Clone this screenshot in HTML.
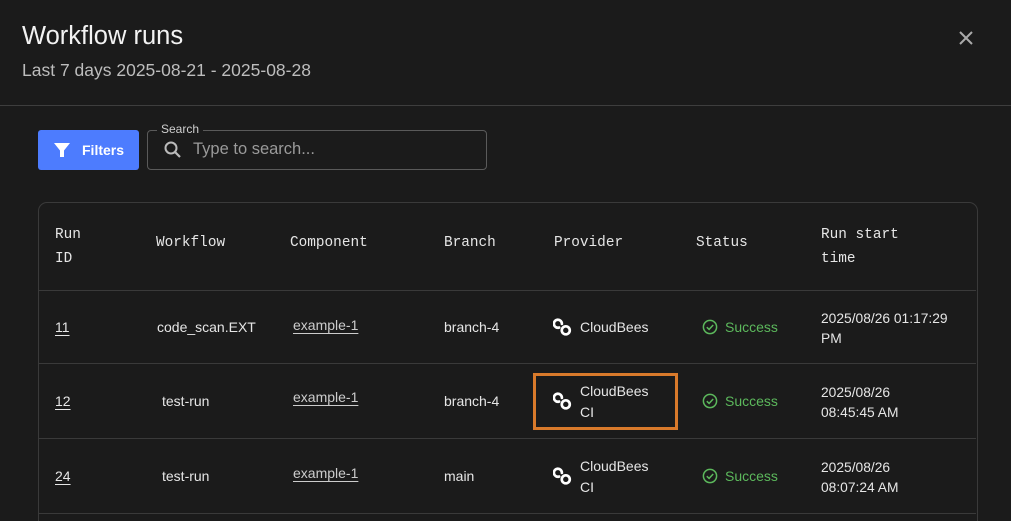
<!DOCTYPE html>
<html><head><meta charset="utf-8"><style>
*{margin:0;padding:0;box-sizing:border-box}
html,body{width:1011px;height:521px;overflow:hidden}
body{background:#1b1b1b;font-family:"Liberation Sans",sans-serif;color:#e8e8e8;position:relative}
.a{position:absolute;white-space:nowrap}
.mono{font-family:"Liberation Mono",monospace;font-size:14.4px;color:#e6e6e6}
.t{font-size:14px;color:#e6e6e6}
.u{text-decoration:underline;text-underline-offset:3px}
.line{position:absolute;left:39px;width:937px;height:1px;background:#3a3a3a}
.ok{color:#5cb85c;font-size:14px}
</style></head><body>
<div class="a" style="left:22px;top:22px;font-size:25.5px;color:#f2f2f2">Workflow runs</div>
<div class="a" style="left:22px;top:60px;font-size:17.5px;color:#bdbdbd">Last 7 days 2025-08-21 - 2025-08-28</div>
<svg class="a" style="left:958px;top:30px" width="16" height="16" viewBox="0 0 16 16"><path d="M2 2L14 14M14 2L2 14" stroke="#aaa" stroke-width="2"/></svg>
<div class="a" style="left:0;top:105px;width:1011px;height:1px;background:#3e3e3e"></div>

<div class="a" style="left:38px;top:130px;width:101px;height:40px;background:#4d7cfe;border-radius:3px"></div>
<svg class="a" style="left:53px;top:141px" width="18" height="18" viewBox="0 0 18 18"><path d="M1 2H17L11 9.5V16H7V9.5Z" fill="#fff"/></svg>
<div class="a" style="left:82px;top:142px;font-size:14px;font-weight:bold;color:#fff">Filters</div>
<div class="a" style="left:147px;top:130px;width:340px;height:40px;border:1px solid #5a5a5a;border-radius:4px"></div>
<div class="a" style="left:157px;top:122px;padding:0 4px;background:#1b1b1b;font-size:12px;color:#cfcfcf">Search</div>
<svg class="a" style="left:163px;top:140px" width="20" height="20" viewBox="0 0 20 20"><circle cx="8" cy="8" r="5.5" stroke="#bbb" stroke-width="2" fill="none"/><path d="M12 12L17 17" stroke="#bbb" stroke-width="2.2"/></svg>
<div class="a" style="left:193px;top:140px;font-size:16.5px;color:#9a9a9a">Type to search...</div>

<div class="a" style="left:38px;top:202px;width:940px;height:330px;border:1px solid #3a3a3a;border-radius:9px"></div>
<div class="line" style="top:290px"></div>
<div class="line" style="top:363px"></div>
<div class="line" style="top:438px"></div>
<div class="line" style="top:513px"></div>

<div class="a mono" style="left:55px;top:223px;line-height:24px">Run<br>ID</div>
<div class="a mono" style="left:156px;top:235px">Workflow</div>
<div class="a mono" style="left:290px;top:235px">Component</div>
<div class="a mono" style="left:444px;top:235px">Branch</div>
<div class="a mono" style="left:554px;top:235px">Provider</div>
<div class="a mono" style="left:696px;top:235px">Status</div>
<div class="a mono" style="left:821px;top:223px;line-height:24px">Run start<br>time</div>

<svg width="0" height="0" style="position:absolute"><defs><g id="cb"><path d="M8 6.2A3.6 3.6 0 1 0 5.5 9.5" stroke="#fff" stroke-width="2.4" fill="none" stroke-linecap="round"/><circle cx="11.5" cy="12" r="3.6" stroke="#fff" stroke-width="2.4" fill="none"/></g><g id="ck"><circle cx="8" cy="8" r="6.6" stroke="#5cb85c" stroke-width="1.5" fill="none"/><path d="M4.8 8.2L7.1 10.4L11.2 6" stroke="#5cb85c" stroke-width="1.5" fill="none"/></g></defs></svg>

<div class="a t u" style="left:55px;top:319px">11</div>
<div class="a t" style="left:157px;top:319px">code_scan.EXT</div>
<div class="a t u" style="left:293px;top:317px;font-size:14px;color:#ccc">example-1</div>
<div class="a t" style="left:444px;top:319px">branch-4</div>
<svg class="a" style="left:553px;top:317px" width="20" height="20" viewBox="0 0 18 18"><use href="#cb"/></svg>
<div class="a t" style="left:580px;top:319px">CloudBees</div>
<svg class="a" style="left:702px;top:319px" width="16" height="16"><use href="#ck"/></svg>
<div class="a ok" style="left:725px;top:319px">Success</div>
<div class="a t" style="left:821px;top:309px;line-height:20px;font-size:13.8px">2025/08/26 01:17:29<br>PM</div>

<div class="a t u" style="left:55px;top:393px">12</div>
<div class="a t" style="left:162px;top:393px">test-run</div>
<div class="a t u" style="left:293px;top:389px;font-size:14px;color:#ccc">example-1</div>
<div class="a t" style="left:444px;top:393px">branch-4</div>
<div class="a" style="left:533px;top:373px;width:145px;height:57px;border:3px solid #d97a2b"></div>
<svg class="a" style="left:553px;top:391px" width="20" height="20" viewBox="0 0 18 18"><use href="#cb"/></svg>
<div class="a t" style="left:580px;top:381px;line-height:21px">CloudBees<br>CI</div>
<svg class="a" style="left:702px;top:393px" width="16" height="16"><use href="#ck"/></svg>
<div class="a ok" style="left:725px;top:393px">Success</div>
<div class="a t" style="left:821px;top:383px;line-height:20px;font-size:13.8px">2025/08/26<br>08:45:45 AM</div>

<div class="a t u" style="left:55px;top:468px">24</div>
<div class="a t" style="left:162px;top:468px">test-run</div>
<div class="a t u" style="left:293px;top:465px;font-size:14px;color:#ccc">example-1</div>
<div class="a t" style="left:444px;top:468px">main</div>
<svg class="a" style="left:553px;top:466px" width="20" height="20" viewBox="0 0 18 18"><use href="#cb"/></svg>
<div class="a t" style="left:580px;top:456px;line-height:21px">CloudBees<br>CI</div>
<svg class="a" style="left:702px;top:468px" width="16" height="16"><use href="#ck"/></svg>
<div class="a ok" style="left:725px;top:468px">Success</div>
<div class="a t" style="left:821px;top:458px;line-height:20px;font-size:13.8px">2025/08/26<br>08:07:24 AM</div>
</body></html>
